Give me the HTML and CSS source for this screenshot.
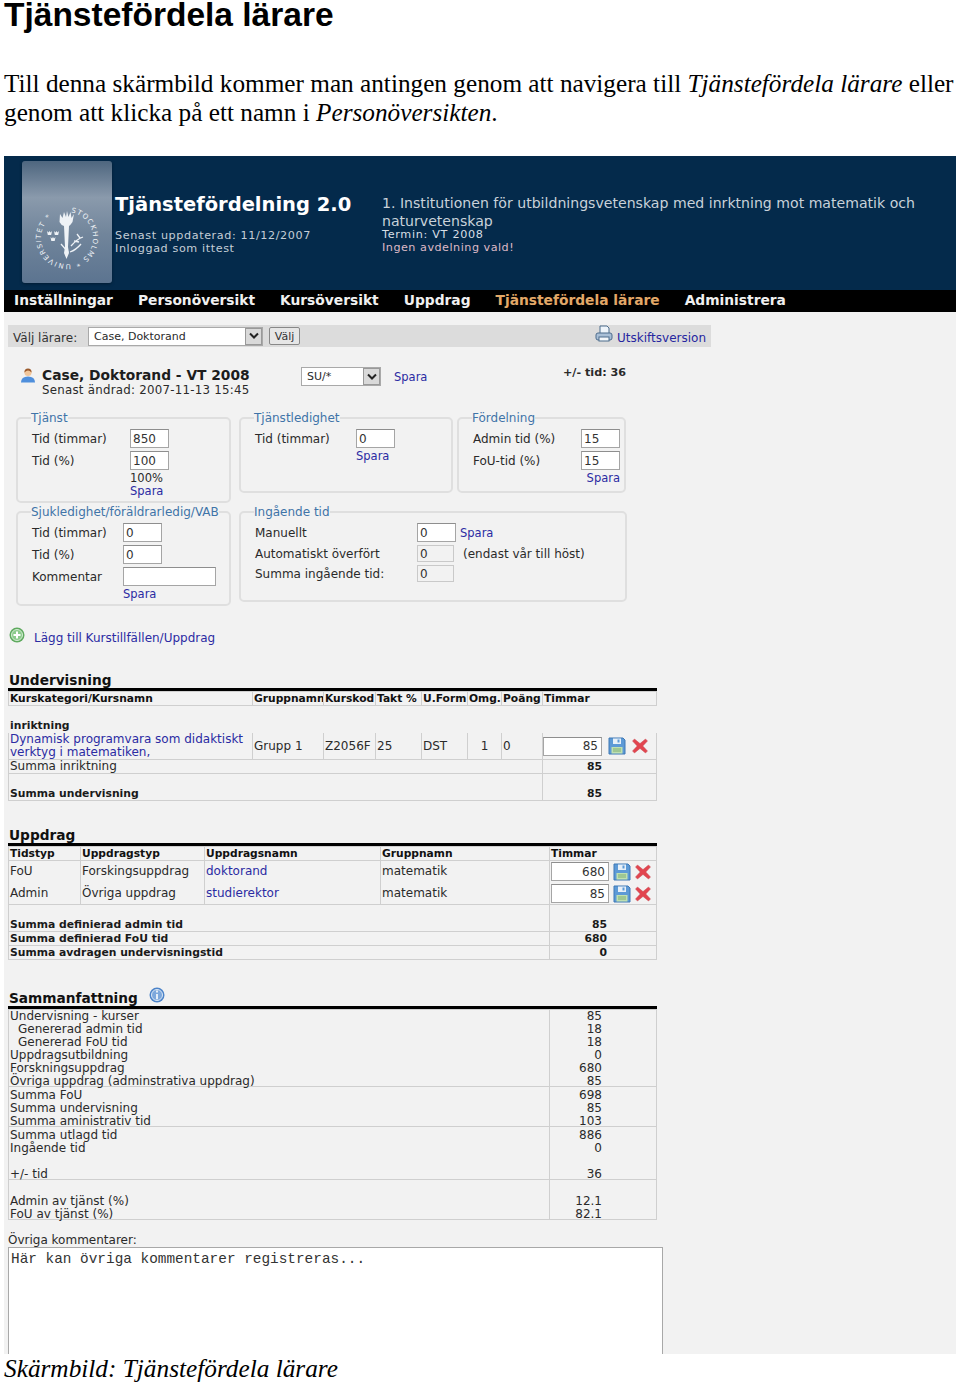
FILE: index.html
```html
<!DOCTYPE html>
<html lang="sv">
<head>
<meta charset="utf-8">
<title>Tjänstefördela lärare</title>
<link rel="stylesheet" href="styles.css">
</head>
<body>
<h1 class="doc-title">Tjänstefördela lärare</h1>
<p class="doc-text">Till denna skärmbild kommer man antingen genom att navigera till <em>Tjänstefördela lärare</em> eller genom att klicka på ett namn i <em>Personöversikten</em>.</p>

<div class="shot">
  <header class="app-head">
    <div class="logo">
      <svg class="seal" viewBox="0 0 80 80" width="80" height="80">
        <defs><path id="ring" d="M40 14a26 26 0 1 1-0.01 0"/></defs>
        <text class="seal-text"><textPath href="#ring" startOffset="4">STOCKHOLMS * UNIVERSITET *</textPath></text>
        <path class="seal-fill" d="M33 16l2.500 4 1.500-6 2 5 1-6 1.500 6 2-5 1 6 2.500-4-1.500 8q-2 3-3.500 4l-1 21 1 6-2.500 6-2.500-6 1-6-1-21q-3-1-4.500-4z"/>
        <path class="seal-fill" d="M20 33l1.500 1.500 1-1.500 1 1.500 1.500-1.500-.8 4h-3.400zM27 33l1.500 1.500 1-1.500 1 1.500 1.500-1.500-.8 4h-3.400zM23.500 39l1.500 1.500 1-1.500 1 1.500 1.500-1.500-.8 4h-3.400z"/>
        <path class="seal-line" d="M44 48q6-7 12-9M43 54q6-2 11-8M34 46l7 8M47 43l5 1M50 36l3 4"/>
      </svg>
    </div>
    <div class="app-title">
      <div class="app-name">Tjänstefördelning 2.0</div>
      <div class="app-meta">Senast uppdaterad: 11/12/2007<br>Inloggad som ittest</div>
    </div>
    <div class="app-org">
      <div class="org-name">1. Institutionen för utbildningsvetenskap med inrktning mot matematik och naturvetenskap</div>
      <div class="org-meta">Termin: VT 2008</div>
      <div class="org-warn">Ingen avdelning vald!</div>
    </div>
  </header>
  <nav class="app-nav">
    <a>Inställningar</a><a>Personöversikt</a><a>Kursöversikt</a><a>Uppdrag</a><a class="active">Tjänstefördela lärare</a><a>Administrera</a>
  </nav>

  <main class="app-main">
    <div class="toolbar">
      <span class="tool-label">Välj lärare:</span>
      <div class="select select-teacher"><span>Case, Doktorand</span><i class="arrow"><svg viewBox="0 0 10 8" width="10" height="8"><path d="M1 1.5l4 4 4-4" /></svg></i></div>
      <button class="btn" type="button">Välj</button>
      <a class="print-link">
        <svg viewBox="0 0 18 18" width="18" height="18"><path class="p-paper" d="M5 1h7l2 2v6H5z"/><rect class="p-body" x="1" y="8" width="16" height="7" rx="2"/><rect class="p-tray" x="4" y="12" width="10" height="4"/></svg>
        <span>Utskiftsversion</span>
      </a>
    </div>

    <div class="person">
      <svg class="user-icon" viewBox="0 0 16 16" width="16" height="17"><path class="u-body" d="M1 15q0-6 7-6t7 6z"/><circle class="u-head" cx="8" cy="5" r="3.6"/><path class="u-hair" d="M4.400 5q0-4 3.600-4t3.600 4q-2-2-3.600-2t-3.600 2z"/></svg>
      <div class="person-text">
        <div class="person-name">Case, Doktorand - VT 2008</div>
        <div class="person-sub">Senast ändrad: 2007-11-13 15:45</div>
      </div>
      <div class="select select-su"><span>SU/*</span><i class="arrow"><svg viewBox="0 0 10 8" width="10" height="8"><path d="M1 1.5l4 4 4-4" /></svg></i></div>
      <a class="link person-save">Spara</a>
      <div class="plusminus">+/- tid: 36</div>
    </div>

    <div class="fs-row">
      <fieldset class="fs fs-a h-92">
        <legend>Tjänst</legend>
        <div class="fgrid g-98">
          <label>Tid (timmar)</label><input value="850">
          <label>Tid (%)</label><input value="100">
          <span></span><div class="stack"><span>100%</span><a class="link">Spara</a></div>
        </div>
      </fieldset>
      <fieldset class="fs fs-b h-82">
        <legend>Tjänstledighet</legend>
        <div class="fgrid g-101">
          <label>Tid (timmar)</label><input value="0">
          <span></span><a class="link">Spara</a>
        </div>
      </fieldset>
      <fieldset class="fs fs-c h-82">
        <legend>Fördelning</legend>
        <div class="fgrid g-108">
          <label>Admin tid (%)</label><input value="15">
          <label>FoU-tid (%)</label><input value="15">
          <span></span><a class="link link-right">Spara</a>
        </div>
      </fieldset>
    </div>

    <div class="fs-row fs-row-2">
      <fieldset class="fs fs-a h-101">
        <legend>Sjukledighet/föräldrarledig/VAB</legend>
        <div class="fgrid g-91">
          <label>Tid (timmar)</label><input value="0">
          <label>Tid (%)</label><input value="0">
          <label>Kommentar</label><input class="wide" value="">
          <span></span><a class="link">Spara</a>
        </div>
      </fieldset>
      <fieldset class="fs fs-d h-97">
        <legend>Ingående tid</legend>
        <div class="fgrid g-162">
          <label>Manuellt</label><div class="inline"><input value="0"><a class="link">Spara</a></div>
          <label>Automatiskt överfört</label><div class="inline"><input class="ro" value="0" readonly><span class="note">(endast vår till höst)</span></div>
          <label>Summa ingående tid:</label><div class="inline"><input class="ro" value="0" readonly></div>
        </div>
      </fieldset>
    </div>

    <div class="add-row">
      <svg viewBox="0 0 16 16" width="16" height="16"><circle class="a-ring" cx="8" cy="8" r="7.5"/><circle class="a-in" cx="8" cy="8" r="5.5"/><path class="a-plus" d="M8 4.500v7M4.500 8h7"/></svg>
      <a class="link">Lägg till Kurstillfällen/Uppdrag</a>
    </div>

    <section class="sec sec-u">
      <h2 class="sec-title">Undervisning</h2>
      <table class="tbl">
        <colgroup><col class="c244"><col class="c71"><col class="c52"><col class="c46"><col class="c46"><col class="c34"><col class="c41"><col></colgroup>
        <tr class="head r14"><th>Kurskategori/Kursnamn</th><th>Gruppnamn</th><th>Kurskod</th><th>Takt %</th><th>U.Form</th><th>Omg.</th><th>Poäng</th><th>Timmar</th></tr>
        <tr class="r13 clear"><td colspan="8"></td></tr>
        <tr class="r13 clear"><td colspan="8" class="b">inriktning</td></tr>
        <tr class="r26">
          <td class="tight"><a class="link">Dynamisk programvara som didaktiskt verktyg i matematiken,</a></td><td>Grupp 1</td><td>Z2056F</td><td>25</td><td>DST</td><td class="ctr">1</td><td>0</td>
          <td><div class="hours"><input class="num n-u" value="85"><svg class="ico" viewBox="0 0 18 18" width="18" height="18"><use href="#save"/></svg><svg class="ico" viewBox="0 0 16 16" width="16" height="16"><use href="#del"/></svg></div></td>
        </tr>
        <tr class="r14"><td colspan="7">Summa inriktning</td><td class="sum b p54">85</td></tr>
        <tr class="r27 low"><td colspan="7" class="b">Summa undervisning</td><td class="sum b p54">85</td></tr>
      </table>
    </section>

    <section class="sec sec-t">
      <h2 class="sec-title">Uppdrag</h2>
      <table class="tbl">
        <colgroup><col class="c72"><col class="c124"><col class="c176"><col class="c169"><col></colgroup>
        <tr class="head r13"><th>Tidstyp</th><th>Uppdragstyp</th><th>Uppdragsnamn</th><th>Gruppnamn</th><th>Timmar</th></tr>
        <tr class="r22 open">
          <td>FoU</td><td>Forskingsuppdrag</td><td><a class="link">doktorand</a></td><td>matematik</td>
          <td><div class="hours h-t"><input class="num n-t" value="680"><svg class="ico" viewBox="0 0 18 18" width="18" height="18"><use href="#save"/></svg><svg class="ico" viewBox="0 0 16 16" width="16" height="16"><use href="#del"/></svg></div></td>
        </tr>
        <tr class="r22 open2">
          <td>Admin</td><td>Övriga uppdrag</td><td><a class="link">studierektor</a></td><td>matematik</td>
          <td><div class="hours h-t"><input class="num n-t" value="85"><svg class="ico" viewBox="0 0 18 18" width="18" height="18"><use href="#save"/></svg><svg class="ico" viewBox="0 0 16 16" width="16" height="16"><use href="#del"/></svg></div></td>
        </tr>
        <tr class="r27 low"><td colspan="4" class="b">Summa definierad admin tid</td><td class="sum b p49">85</td></tr>
        <tr class="r14"><td colspan="4" class="b">Summa definierad FoU tid</td><td class="sum b p49">680</td></tr>
        <tr class="r14"><td colspan="4" class="b">Summa avdragen undervisningstid</td><td class="sum b p49">0</td></tr>
      </table>
    </section>

    <section class="sec sec-s">
      <h2 class="sec-title"><span>Sammanfattning</span>
        <svg class="info" viewBox="0 0 16 16" width="16" height="16"><circle class="i-ring" cx="8" cy="8" r="7.5"/><circle class="i-in" cx="8" cy="8" r="5.5"/><path class="i-mark" d="M8 3.600v1.800M8 7v5.200"/></svg>
      </h2>
      <table class="tbl sum-tbl">
        <colgroup><col class="c541"><col></colgroup>
        <tbody>
        <tr><td class="g"><div>Undervisning - kurser</div><div class="ind">Genererad admin tid</div><div class="ind">Genererad FoU tid</div><div>Uppdragsutbildning</div><div>Forskningsuppdrag</div><div>Övriga uppdrag (adminstrativa uppdrag)</div></td>
            <td class="g val"><div>85</div><div>18</div><div>18</div><div>0</div><div>680</div><div>85</div></td></tr>
        <tr><td class="g"><div>Summa FoU</div><div>Summa undervisning</div><div>Summa aministrativ tid</div></td>
            <td class="g val"><div>698</div><div>85</div><div>103</div></td></tr>
        <tr><td class="g"><div>Summa utlagd tid</div><div>Ingående tid</div><div>&nbsp;</div><div>+/- tid</div></td>
            <td class="g val"><div>886</div><div>0</div><div>&nbsp;</div><div>36</div></td></tr>
        <tr><td class="g"><div>&nbsp;</div><div>Admin av tjänst (%)</div><div>FoU av tjänst (%)</div></td>
            <td class="g val"><div>&nbsp;</div><div>12.1</div><div>82.1</div></td></tr>
        </tbody>
      </table>
    </section>

    <div class="comment-label">Övriga kommentarer:</div>
    <textarea class="comment">Här kan övriga kommentarer registreras...</textarea>
  </main>
</div>

<p class="caption"><em>Skärmbild: Tjänstefördela lärare</em></p>

<svg class="defs" width="0" height="0" aria-hidden="true">
  <symbol id="save" viewBox="0 0 18 18">
    <path d="M1 1h14l2 2v14H1z" fill="#5d9ad6" stroke="#3f78b5"/>
    <rect x="5" y="1.500" width="8" height="5.500" fill="#e8f0f8"/>
    <rect x="9.500" y="2.500" width="2" height="3" fill="#5d9ad6"/>
    <rect x="3.500" y="10" width="11" height="6.500" fill="#bfe0b0"/>
    <path d="M5 12h8M5 14h8" stroke="#7fae74"/>
  </symbol>
  <symbol id="del" viewBox="0 0 16 16">
    <path d="M2.500 1L8 5.600 13.500 1 15.500 3 10.800 8l4.700 5-2 2L8 10.400 2.500 15l-2-2 4.700-5L.5 3z" fill="#e2454f" stroke="#c9555c" stroke-width=".5"/>
  </symbol>
</svg>
</body>
</html>
```
FILE: styles.css
```css
* { box-sizing: border-box; }
html, body { margin: 0; padding: 0; background: #fff; }
body { padding: 0 4px; height: 1386px; overflow: hidden; color: #000; }

.doc-title {
  font: bold 33.5px/32px "Liberation Sans", Arial, sans-serif;
  margin: -1px 0 0;
  height: 31px;
  white-space: nowrap;
}
.doc-text {
  font: 25.25px/28.5px "Liberation Serif", "Times New Roman", serif;
  margin: 39px 0 0;
  width: 952px;
}
.caption {
  font: 25.3px/29px "Liberation Serif", "Times New Roman", serif;
  margin: 0;
}
.defs { position: absolute; }

.shot {
  margin-top: 30px;
  width: 952px;
  height: 1198px;
  overflow: hidden;
  background: #f2f2f2;
  font-family: "DejaVu Sans", Verdana, sans-serif;
  font-size: 11.5px;
  color: #2a2a2a;
}

/* header */
.app-head {
  height: 134px;
  background: #042a4b;
  display: flex;
  color: #d8dfe6;
}
.logo {
  width: 90px;
  height: 122px;
  margin: 5px 3px 0 18px;
  border-radius: 3px;
  background: linear-gradient(#4e667f 0%, #8a9aac 30%, #71859b 60%, #5c7490 100%);
  box-shadow: 0 1px 3px #021c33;
  display: flex;
  align-items: flex-end;
  justify-content: center;
  padding-bottom: 5px;
}
.seal-text { font: 7px "DejaVu Sans", sans-serif; fill: #eef2f6; letter-spacing: 1.3px; }
.seal-fill { fill: #eef2f6; }
.seal-line { fill: none; stroke: #eef2f6; stroke-width: 1.3; }
.app-title { width: 267px; padding-top: 37px; }
.app-name { font-size: 19.5px; line-height: 24px; font-weight: bold; color: #fff; white-space: nowrap; }
.app-meta { margin-top: 12px; font-size: 11.2px; line-height: 13px; letter-spacing: .6px; color: #c5ced7; white-space: nowrap; }
.app-org { width: 545px; padding-top: 38px; }
.org-name { font-size: 14.1px; line-height: 18px; color: #c9d2da; }
.org-meta { font-size: 11.2px; line-height: 13px; letter-spacing: .7px; margin-top: -2px; }
.org-warn { font-size: 11.2px; line-height: 13px; letter-spacing: .5px; color: #dcb9c6; }

.app-nav {
  height: 22px;
  background: #000;
  display: flex;
  gap: 25px;
  padding-left: 10px;
  font-size: 13.8px;
  line-height: 21px;
  font-weight: bold;
  color: #f0f0f0;
  white-space: nowrap;
}
.active { color: #e3a868; }

/* main */
.app-main { padding: 13px 0 0 4px; }
.toolbar {
  width: 703px;
  height: 22px;
  background: #dcdcdc;
  display: flex;
  align-items: center;
  position: relative;
}
.tool-label { margin-left: 5px; width: 75px; color: #333; padding-top: 3px; font-size: 12px; }
.select {
  display: flex;
  align-items: center;
  justify-content: space-between;
  background: #fff;
  border: 1px solid #a9a9a9;
  height: 19px;
  padding-left: 5px;
  font-size: 11px;
}
.select-teacher { width: 175px; margin-right: 6px; }
.select-su { width: 80px; margin-right: 13px; }
.arrow {
  width: 17px;
  height: 17px;
  background: #d9d9d9;
  border: 1px solid #999;
  display: flex;
  align-items: center;
  justify-content: center;
}
.arrow path { fill: none; stroke: #222; stroke-width: 2; }
.btn {
  width: 31px;
  height: 18px;
  padding: 0;
  background: #e6e6e6;
  border: 1px solid #888;
  border-radius: 2px;
  font: 11px "DejaVu Sans", sans-serif;
  color: #333;
}
.print-link {
  margin-left: auto;
  margin-right: 5px;
  display: flex;
  align-items: flex-start;
  gap: 4px;
  color: #2626a0;
  font-size: 12px;
  line-height: 14px;
  height: 22px;
}
.print-link span { margin-top: 6px; }
.p-paper { fill: #eef4fa; stroke: #4d6c8c; }
.p-body { fill: #a9bfd6; stroke: #4d6c8c; }
.p-tray { fill: #f4f7fa; stroke: #4d6c8c; }

.link { color: #2b2ba3; }
.person {
  height: 64px;
  padding: 20px 0 0 12px;
  display: flex;
  align-items: flex-start;
  position: relative;
}
.user-icon { margin-right: 6px; }
.u-body { fill: #4f8fdc; }
.u-head { fill: #f1c69b; }
.u-hair { fill: #9b5a2c; }
.person-text { width: 259px; }
.person-name { font-size: 13.8px; line-height: 17px; font-weight: bold; color: #1d1d1d; white-space: nowrap; }
.person-sub { font-size: 11.8px; line-height: 13px; letter-spacing: .25px; white-space: nowrap; }
.person-save { margin-top: 3px; }
.plusminus { position: absolute; left: 555px; top: 19px; font-weight: bold; font-size: 11.2px; }

/* fieldsets */
.fs-row { display: flex; gap: 4px; margin-left: 8px; align-items: flex-start; }
.fs-row-2 { gap: 8px; margin-top: 2px; }
.fs {
  margin: 0;
  padding: 0 0 0 13px;
  border: 2px solid #dfdfdf;
  border-radius: 5px;
  min-width: 0;
}
.fs legend { padding: 0; color: #3f74a8; font-size: 12px; line-height: 14px; white-space: nowrap; }
.fs-a { width: 215px; }
.fs-row > .fs-a { margin-right: 4px; }
.fs-row-2 > .fs-a { margin-right: 0; }
.fs-b { width: 214px; }
.fs-c { width: 169px; }
.fs-d { width: 388px; }
.h-92 { height: 92px; }
.h-82 { height: 82px; }
.h-101 { height: 101px; }
.h-97 { height: 97px; }
.fgrid { display: grid; row-gap: 3px; align-items: center; padding-top: 4px; padding-left: 1px; }
.g-98 { grid-template-columns: 98px 60px; }
.g-101 { grid-template-columns: 101px 60px; }
.g-108 { grid-template-columns: 108px 39px; }
.g-91 { grid-template-columns: 91px 100px; }
.g-162 { grid-template-columns: 162px 1fr; }
.fgrid input {
  width: 39px;
  height: 19px;
  padding: 0 2px;
  border: 1px solid #a5a5a5;
  border-top-color: #8e8e8e;
  background: #fff;
  font: 12px "DejaVu Sans", sans-serif;
  color: #333;
  outline: none;
}
.fgrid input.wide { width: 93px; }
.fgrid input.ro { width: 37px; height: 17px; background: #f2f2f2; border-color: #c9c9c9; }
.fgrid label { white-space: nowrap; font-size: 12px; }
.stack { display: flex; flex-direction: column; line-height: 13px; margin-top: -1px; }
.link-right { text-align: right; }
.fgrid > .link { line-height: 12px; margin-top: -1px; }
.inline { display: flex; align-items: center; gap: 4px; }
.note { margin-left: 5px; font-size: 12px; white-space: nowrap; }

.add-row { display: flex; align-items: flex-start; gap: 9px; margin: 21px 0 0 1px; height: 18px; }
.add-row .link { margin-top: 4px; font-size: 12px; line-height: 14px; }
.a-ring { fill: #5faa5f; }
.a-in { fill: #8ccb8c; stroke: #d5ecd5; }
.a-plus { stroke: #fff; stroke-width: 2; }

/* tables */
.sec { width: 649px; }
.sec-u { margin-top: 27px; }
.sec-t { margin-top: 26px; }
.sec-s { margin-top: 27px; }
.sec-title {
  margin: 0;
  padding-left: 1px;
  font-size: 13.7px;
  line-height: 16px;
  font-weight: bold;
  color: #111;
  border-bottom: 3px solid #000;
  display: flow-root;
}
.info { vertical-align: 0; margin-left: 6px; }
.i-ring { fill: #4d84c9; }
.i-in { fill: #7da8dc; stroke: #dbe7f5; }
.i-mark { stroke: #fff; stroke-width: 1.6; }

.tbl { width: 649px; table-layout: fixed; border-collapse: collapse; font-size: 12px; }
.tbl th, .tbl td {
  border: 1px solid #cfcfcf;
  padding: 0 1px;
  line-height: 13px;
  text-align: left;
  vertical-align: middle;
  white-space: nowrap;
  overflow: hidden;
}
.tbl th { font-size: 10.7px; color: #111; }
.tbl td.b { font-size: 10.8px; color: #1a1a1a; }
.tbl td.tight { white-space: normal; line-height: 13px; }
.c244 { width: 244px; }
.c71 { width: 71px; }
.c52 { width: 52px; }
.c46 { width: 46px; }
.c34 { width: 34px; }
.c41 { width: 41px; }
.c72 { width: 72px; }
.c124 { width: 124px; }
.c176 { width: 176px; }
.c169 { width: 169px; }
.c541 { width: 541px; }
.r13 { height: 13px; }
.r14 { height: 14px; }
.r22 { height: 22px; }
.r26 { height: 26px; }
.r27 { height: 27px; }
.clear td { border-left-color: transparent; border-right-color: transparent; border-bottom-color: transparent; }
.b { font-weight: bold; }
.ctr { text-align: center !important; }
.sum { text-align: right !important; }
.p54 { padding-right: 54px !important; }
.p49 { padding-right: 49px !important; }
.low td { vertical-align: bottom; }
.tbl .open td { border-bottom-color: transparent; }
.hours { display: flex; align-items: center; gap: 6px; }
.h-t { gap: 4px; }
.num {
  height: 19px;
  padding: 0 3px;
  text-align: right;
  border: 1px solid #a5a5a5;
  border-top-color: #8e8e8e;
  background: #fff;
  font: 12px "DejaVu Sans", sans-serif;
  color: #333;
  outline: none;
}
.n-u { width: 59px; margin-left: -1px; }
.n-t { width: 58px; }
.ico { flex: none; }

.sum-tbl td.g { vertical-align: top; padding: 0 1px; overflow: visible; }
.sum-tbl tr + tr td.g { padding-top: 2px; }
.sum-tbl td.val { text-align: right; padding-right: 54px; }
.sum-tbl td div { height: 13px; line-height: 13px; }
.sum-tbl td div:last-child { height: 11px; }
.ind { padding-left: 8px; }

.comment-label { margin-top: 14px; line-height: 13px; font-size: 12px; }
.comment {
  display: block;
  width: 655px;
  height: 180px;
  padding: 3px 2px;
  border: 1px solid #a8a8a8;
  background: #fff;
  resize: none;
  outline: none;
  font: 14.4px/16px "Liberation Mono", "Courier New", monospace;
  color: #333;
}
```
